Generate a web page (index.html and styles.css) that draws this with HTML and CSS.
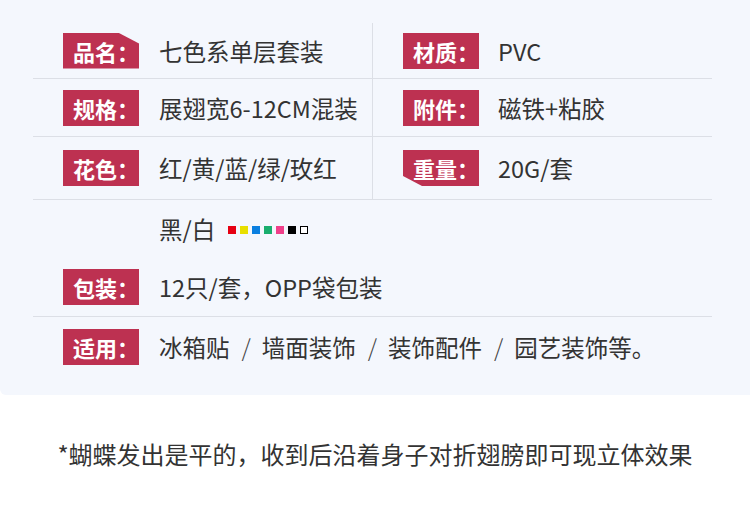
FILE: index.html
```html
<!DOCTYPE html>
<html lang="zh-CN">
<head>
<meta charset="utf-8">
<title>产品参数</title>
<link rel="stylesheet" href="styles.css">
</head>
<body>
<section class="panel">
  <div class="row r1 split">
    <div class="cell"><span class="tag notch-tr">品名：</span><span class="val">七色系单层套装</span></div>
    <div class="cell right"><span class="tag">材质：</span><span class="val">PVC</span></div>
  </div>
  <div class="row r2 split">
    <div class="cell"><span class="tag">规格：</span><span class="val">展翅宽6-12CM混装</span></div>
    <div class="cell right"><span class="tag">附件：</span><span class="val">磁铁+粘胶</span></div>
  </div>
  <div class="row r3 split">
    <div class="cell"><span class="tag">花色：</span><span class="val">红/黄/蓝/绿/玫红</span></div>
    <div class="cell right"><span class="tag notch-bl">重量：</span><span class="val">20G/套</span></div>
  </div>
  <div class="row r4 noline">
    <div class="cell indent"><span class="val">黑/白</span>
      <span class="swatches">
        <i class="sw red"></i><i class="sw yellow"></i><i class="sw blue"></i><i class="sw green"></i><i class="sw pink"></i><i class="sw black"></i><i class="sw white"></i>
      </span>
    </div>
  </div>
  <div class="row r5">
    <div class="cell"><span class="tag">包装：</span><span class="val">12只/套，OPP袋包装</span></div>
  </div>
  <div class="row r6 noline">
    <div class="cell"><span class="tag">适用：</span><span class="val">冰箱贴<span class="sep">/</span>墙面装饰<span class="sep">/</span>装饰配件<span class="sep">/</span>园艺装饰等。</span></div>
  </div>
</section>
<p class="note">*蝴蝶发出是平的，收到后沿着身子对折翅膀即可现立体效果</p>
</body>
</html>
```
FILE: styles.css
```css
html, body {
  margin: 0;
  padding: 0;
  background: #ffffff;
}
body {
  width: 750px;
  height: 509px;
  overflow: hidden;
  font-family: "Noto Sans CJK SC", "Noto Sans", sans-serif;
  color: #333333;
}
.panel {
  background: #f4f7fd;
  height: 395px;
  box-sizing: border-box;
  padding: 23px 38px 0 33px;
  border-bottom-left-radius: 6px;
}
.row {
  display: grid;
  grid-template-columns: 1fr;
  border-bottom: 1px solid #dcdfe6;
}
.row.split {
  grid-template-columns: 339px 340px;
}
.row.noline {
  border-bottom: none;
}
.r1 { height: 55px; }
.r2 { height: 57px; }
.r3 { height: 62px; }
.r4 { height: 58px; }
.r5 { height: 58px; }
.r6 { height: 60px; }
.cell {
  display: flex;
  align-items: center;
  padding-left: 30px;
}
.cell.right {
  border-left: 1px solid #dcdfe6;
}
.cell.indent {
  padding-left: 126px;
}
.tag {
  flex: none;
  width: 76px;
  height: 36px;
  box-sizing: border-box;
  padding-left: 10px;
  background: #bd3151;
  color: #ffffff;
  font-size: 22px;
  font-weight: 700;
  line-height: 36px;
  white-space: nowrap;
  overflow: hidden;
}
.notch-tr {
  clip-path: polygon(0 0, 55px 0, 100% 11px, 100% 100%, 0 100%);
}
.notch-bl {
  clip-path: polygon(0 0, 100% 0, 100% 100%, 19px 100%, 0 26px);
}
.val {
  margin-left: 20px;
  font-size: 23.5px;
  line-height: 30px;
  color: #333333;
  white-space: nowrap;
}
.sep {
  display: inline-block;
  margin: 0 11px 0 12px;
  color: #444444;
  font-weight: 300;
}
.cell.right .val {
  margin-left: 19px;
}
.cell.indent .val {
  margin-left: 0;
}
.swatches {
  display: flex;
  gap: 4px;
  margin-left: 13px;
  margin-top: 2px;
}
.sw {
  display: block;
  width: 8px;
  height: 8px;
  box-sizing: border-box;
}
.red { background: #e60012; }
.yellow { background: #e8df00; }
.blue { background: #0a7fe0; }
.green { background: #1aae6e; }
.pink { background: #f03f8a; }
.black { background: #000000; }
.white { background: #ffffff; border: 1.5px solid #000000; }
.note {
  margin: 0;
  padding-top: 44px;
  text-align: center;
  font-size: 24px;
  line-height: 30px;
  color: #333333;
}
```
